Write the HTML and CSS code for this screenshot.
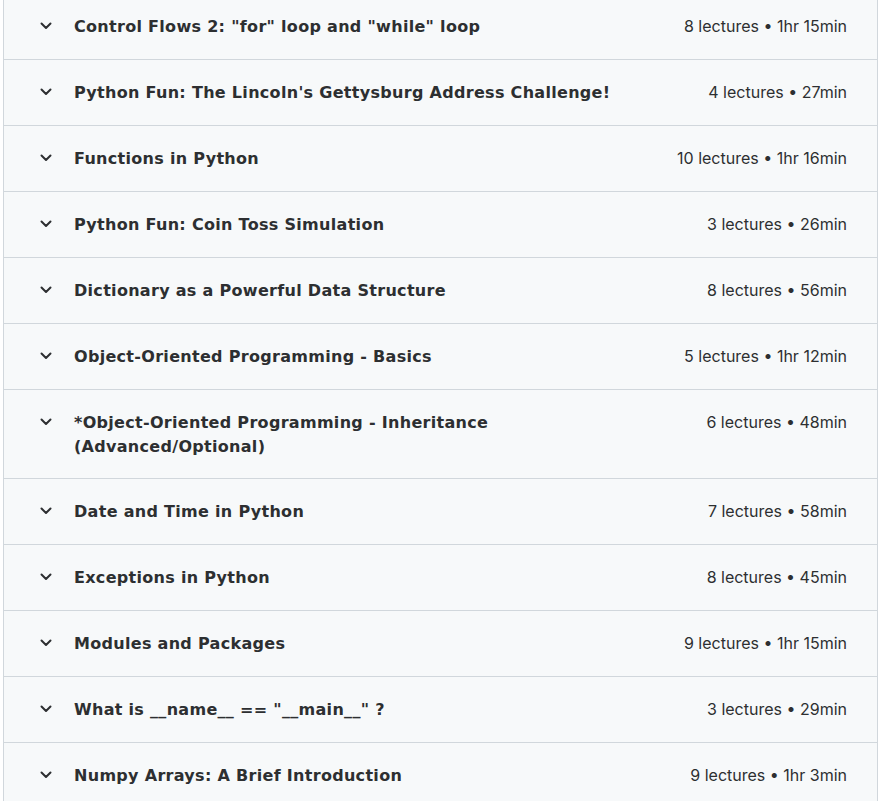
FILE: index.html
```html
<!DOCTYPE html>
<html lang="en">
<head>
<meta charset="utf-8">
<title>Curriculum</title>
<link rel="stylesheet" href="styles.css">
</head>
<body>
<div class="curriculum">
  <div class="section">
    <svg class="chev" viewBox="0 0 12 8" width="12" height="8"><path d="M1.5 1.5 L6 6 L10.5 1.5" /></svg>
    <span class="title">Control Flows 2: "for" loop and "while" loop</span>
    <span class="meta">8 lectures • 1hr 15min</span>
  </div>
  <div class="section">
    <svg class="chev" viewBox="0 0 12 8" width="12" height="8"><path d="M1.5 1.5 L6 6 L10.5 1.5" /></svg>
    <span class="title">Python Fun: The Lincoln's Gettysburg Address Challenge!</span>
    <span class="meta">4 lectures • 27min</span>
  </div>
  <div class="section">
    <svg class="chev" viewBox="0 0 12 8" width="12" height="8"><path d="M1.5 1.5 L6 6 L10.5 1.5" /></svg>
    <span class="title">Functions in Python</span>
    <span class="meta">10 lectures • 1hr 16min</span>
  </div>
  <div class="section">
    <svg class="chev" viewBox="0 0 12 8" width="12" height="8"><path d="M1.5 1.5 L6 6 L10.5 1.5" /></svg>
    <span class="title">Python Fun: Coin Toss Simulation</span>
    <span class="meta">3 lectures • 26min</span>
  </div>
  <div class="section">
    <svg class="chev" viewBox="0 0 12 8" width="12" height="8"><path d="M1.5 1.5 L6 6 L10.5 1.5" /></svg>
    <span class="title">Dictionary as a Powerful Data Structure</span>
    <span class="meta">8 lectures • 56min</span>
  </div>
  <div class="section">
    <svg class="chev" viewBox="0 0 12 8" width="12" height="8"><path d="M1.5 1.5 L6 6 L10.5 1.5" /></svg>
    <span class="title">Object-Oriented Programming - Basics</span>
    <span class="meta">5 lectures • 1hr 12min</span>
  </div>
  <div class="section">
    <svg class="chev" viewBox="0 0 12 8" width="12" height="8"><path d="M1.5 1.5 L6 6 L10.5 1.5" /></svg>
    <span class="title">*Object-Oriented Programming - Inheritance (Advanced/Optional)</span>
    <span class="meta">6 lectures • 48min</span>
  </div>
  <div class="section">
    <svg class="chev" viewBox="0 0 12 8" width="12" height="8"><path d="M1.5 1.5 L6 6 L10.5 1.5" /></svg>
    <span class="title">Date and Time in Python</span>
    <span class="meta">7 lectures • 58min</span>
  </div>
  <div class="section">
    <svg class="chev" viewBox="0 0 12 8" width="12" height="8"><path d="M1.5 1.5 L6 6 L10.5 1.5" /></svg>
    <span class="title">Exceptions in Python</span>
    <span class="meta">8 lectures • 45min</span>
  </div>
  <div class="section">
    <svg class="chev" viewBox="0 0 12 8" width="12" height="8"><path d="M1.5 1.5 L6 6 L10.5 1.5" /></svg>
    <span class="title">Modules and Packages</span>
    <span class="meta">9 lectures • 1hr 15min</span>
  </div>
  <div class="section">
    <svg class="chev" viewBox="0 0 12 8" width="12" height="8"><path d="M1.5 1.5 L6 6 L10.5 1.5" /></svg>
    <span class="title">What is __name__ == "__main__" ?</span>
    <span class="meta">3 lectures • 29min</span>
  </div>
  <div class="section">
    <svg class="chev" viewBox="0 0 12 8" width="12" height="8"><path d="M1.5 1.5 L6 6 L10.5 1.5" /></svg>
    <span class="title">Numpy Arrays: A Brief Introduction</span>
    <span class="meta">9 lectures • 1hr 3min</span>
  </div>
</div>
</body>
</html>
```
FILE: styles.css
```css
html, body {
  margin: 0;
  padding: 0;
  background: #ffffff;
}
body {
  font-family: Inter, "Noto Sans", sans-serif;
  color: #2d2f31;
  overflow: hidden;
}
.curriculum {
  margin: -6px 0 0 3px;
  width: 875px;
  box-sizing: border-box;
  border-left: 1px solid #d1d7dc;
  border-right: 1px solid #d1d7dc;
  background: #f7f9fa;
}
.section {
  display: flex;
  align-items: flex-start;
  min-height: 26px;
  padding: 20px 30px 19px 36px;
  border-bottom: 1px solid #d1d7dc;
}
.chev {
  flex: none;
  margin: 8px 22px 0 0;
  fill: none;
  stroke: #2d2f31;
  stroke-width: 2;
  stroke-linecap: round;
  stroke-linejoin: round;
}
.title {
  flex: 1;
  padding-top: 1px;
  font-family: "DejaVu Sans", Inter, sans-serif;
  font-size: 16px;
  font-weight: 700;
  letter-spacing: 0.3px;
  line-height: 24px;
}
.meta {
  flex: none;
  margin-left: 24px;
  font-size: 16px;
  font-weight: 400;
  line-height: 24px;
  white-space: nowrap;
}
```
